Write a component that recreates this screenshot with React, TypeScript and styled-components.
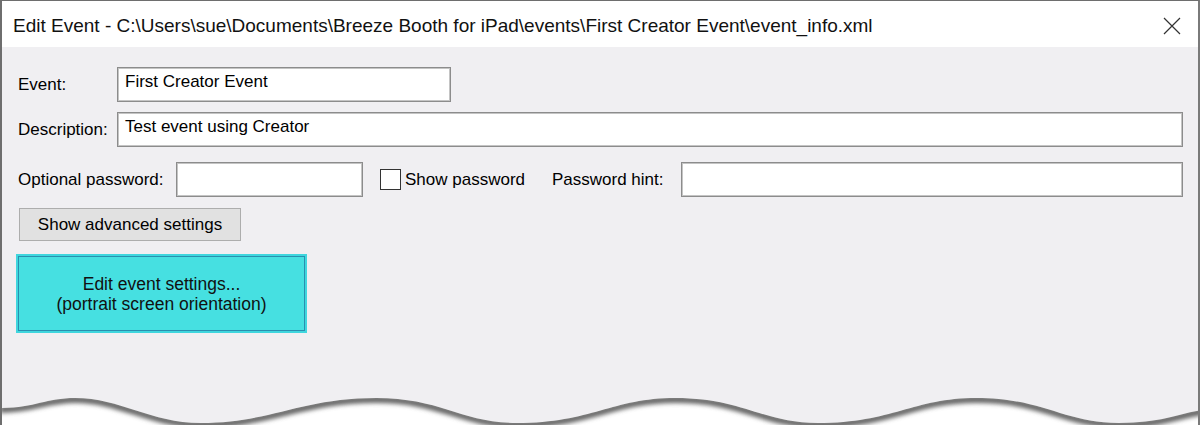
import React from 'react';
import styled, { createGlobalStyle } from 'styled-components';

const GlobalStyle = createGlobalStyle`
  html, body {
    margin: 0;
    padding: 0;
    background: #ffffff;
    overflow: hidden;
  }
  * {
    box-sizing: border-box;
  }
`;

const Window = styled.div`
  position: relative;
  width: 1200px;
  height: 425px;
  background: #f0eff2;
  border-top: 1px solid #6e6e6e;
  border-left: 2px solid #6e6e6e;
  border-right: 2px solid #7a7a7a;
  overflow: hidden;
  font-family: 'Liberation Sans', Arial, sans-serif;
  color: #000;
`;

const TitleBar = styled.div`
  height: 46px;
  background: #ffffff;
  display: flex;
  align-items: center;
  justify-content: space-between;
  padding: 3px 17px 0 11px;
`;

const Title = styled.div`
  font-size: 19px;
  color: #111;
  white-space: nowrap;
`;

const Body = styled.div`
  display: flex;
  flex-direction: column;
  padding: 20px 15px 0 16px;
`;

const Row = styled.div<{ $gap: number }>`
  display: flex;
  align-items: center;
  margin-bottom: ${p => p.$gap}px;
`;

const Label = styled.label<{ $w?: number }>`
  font-size: 17px;
  white-space: nowrap;
  ${p => (p.$w ? `width: ${p.$w}px; flex: none;` : '')}
`;

const TextBox = styled.div<{ $w?: number }>`
  height: 35px;
  background: #fff;
  border: 1px solid #8c8c8c;
  box-shadow: inset 0 0 0 1px #c4c4c4;
  padding: 4px 7px 0;
  font-size: 17px;
  white-space: nowrap;
  ${p => (p.$w ? `width: ${p.$w}px; flex: none;` : 'flex: 1;')}
`;

const CheckBox = styled.span`
  width: 21px;
  height: 21px;
  background: #fff;
  border: 1px solid #333;
  margin: 0 4px 0 17px;
  flex: none;
`;

const PlainButton = styled.div`
  width: 222px;
  height: 33px;
  margin-left: 1px;
  background: #e1e1e1;
  border: 1px solid #adadad;
  display: flex;
  align-items: center;
  justify-content: center;
  font-size: 17px;
`;

const CyanButton = styled.div`
  width: 291px;
  height: 79px;
  margin-left: -2px;
  background: #46e0e1;
  border: 2px solid #3fd6de;
  box-shadow: inset 0 0 0 1px #2a8fae;
  display: flex;
  flex-direction: column;
  align-items: center;
  justify-content: center;
  font-size: 17.5px;
  line-height: 20px;
  color: #111;
`;

const TornEdge = styled.svg`
  position: absolute;
  left: -2px;
  bottom: 0;
  display: block;
`;

const wave =
  'M0 23 C35 23 45 13 75 13 C120 13 150 38 200 38 C270 38 300 13 375 13 C440 13 460 38 515 38 C590 38 610 13 673 13 C740 13 760 38 815 38 C890 38 910 13 973 13 C1040 13 1060 38 1115 38 C1160 38 1175 28 1200 25';

const CloseIcon = () => (
  <svg width="18" height="18" viewBox="0 0 18 18">
    <path d="M1 1 L17 17 M17 1 L1 17" stroke="#333" strokeWidth="1.2" fill="none" />
  </svg>
);

export default function App() {
  return (
    <>
      <GlobalStyle />
      <Window>
        <TitleBar>
          <Title>
            Edit Event - C:\Users\sue\Documents\Breeze Booth for iPad\events\First Creator Event\event_info.xml
          </Title>
          <CloseIcon />
        </TitleBar>
        <Body>
          <Row $gap={10}>
            <Label $w={99}>Event:</Label>
            <TextBox $w={334}>First Creator Event</TextBox>
          </Row>
          <Row $gap={15}>
            <Label $w={99}>Description:</Label>
            <TextBox>Test event using Creator</TextBox>
          </Row>
          <Row $gap={11}>
            <Label $w={158}>Optional password:</Label>
            <TextBox $w={187} />
            <CheckBox />
            <Label $w={147}>Show password</Label>
            <Label $w={129}>Password hint:</Label>
            <TextBox />
          </Row>
          <Row $gap={13}>
            <PlainButton>Show advanced settings</PlainButton>
          </Row>
          <Row $gap={0}>
            <CyanButton>
              <span>Edit event settings...</span>
              <span>(portrait screen orientation)</span>
            </CyanButton>
          </Row>
        </Body>
        <TornEdge width="1204" height="40" viewBox="0 0 1200 40" preserveAspectRatio="none">
          <defs>
            <filter id="blur" x="-5%" y="-100%" width="110%" height="300%">
              <feGaussianBlur stdDeviation="2" />
            </filter>
            <clipPath id="below">
              <path d={wave + ' L1200 40 L0 40 Z'} />
            </clipPath>
          </defs>
          <path d={wave + ' L1200 40 L0 40 Z'} fill="#ffffff" />
          <g clipPath="url(#below)">
            <path d={wave} transform="translate(0 1.5)" stroke="#666" strokeWidth="7" fill="none" filter="url(#blur)" />
          </g>
        </TornEdge>
      </Window>
    </>
  );
}
